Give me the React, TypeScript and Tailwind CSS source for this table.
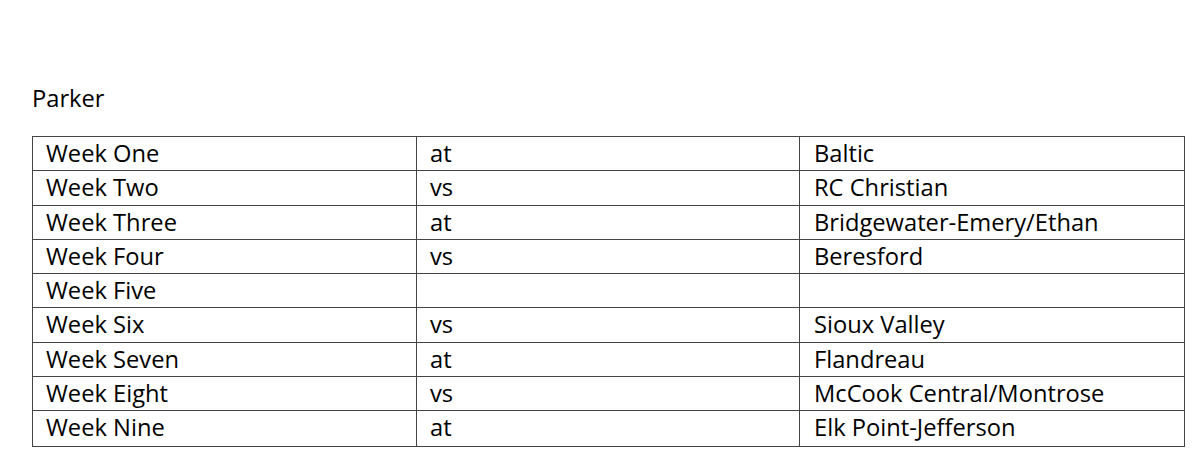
const rows: [string, string, string][] = [
  ['Week One', 'at', 'Baltic'],
  ['Week Two', 'vs', 'RC Christian'],
  ['Week Three', 'at', 'Bridgewater-Emery/Ethan'],
  ['Week Four', 'vs', 'Beresford'],
  ['Week Five', '', ''],
  ['Week Six', 'vs', 'Sioux Valley'],
  ['Week Seven', 'at', 'Flandreau'],
  ['Week Eight', 'vs', 'McCook Central/Montrose'],
  ['Week Nine', 'at', 'Elk Point-Jefferson'],
];

export default function App() {
  return (
    <div className="w-[1200px] h-[476px] bg-white text-black font-['Open_Sans',sans-serif] text-[23.7px] overflow-hidden">
      <div className="pt-[82px] pl-[32px] leading-[32px]">Parker</div>
      <div className="mt-[22px] ml-[32px] w-[1153px] border-[1.5px] border-[#444]">
        {rows.map(([week, where, team], i) => (
          <div
            key={week}
            className={`grid grid-cols-[384px_383px_1fr] h-[34.3px] ${i < rows.length - 1 ? 'border-b-[1.5px] border-[#444]' : ''}`}
          >
            <div className="pl-[13px] leading-[32px] border-r-[1.5px] border-[#444]">{week}</div>
            <div className="pl-[13px] leading-[32px] border-r-[1.5px] border-[#444]">{where}</div>
            <div className="pl-[14px] leading-[32px]">{team}</div>
          </div>
        ))}
      </div>
    </div>
  );
}
